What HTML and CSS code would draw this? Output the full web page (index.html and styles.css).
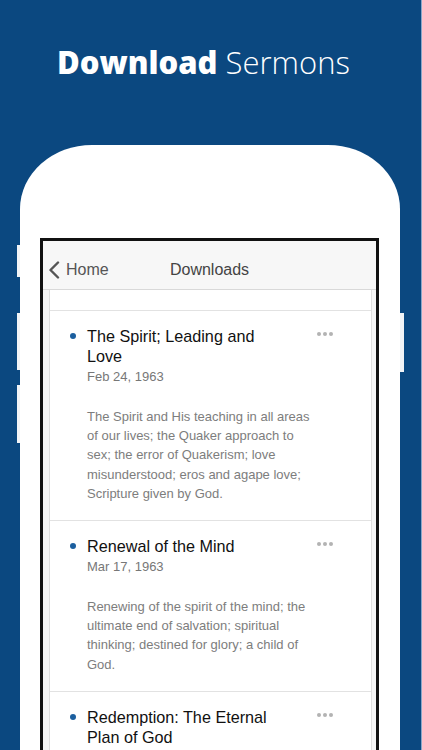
FILE: index.html
```html
<!DOCTYPE html>
<html>
<head>
<meta charset="utf-8">
<link rel="stylesheet" href="styles.css">
</head>
<body>
<div class="page">
  <h1 class="headline"><span class="strong">Download</span> <span class="light">Sermons</span></h1>
  <div class="phone">
    <span class="btn btn-l1"></span>
    <span class="btn btn-l2"></span>
    <span class="btn btn-l3"></span>
    <span class="btn btn-r1"></span>
    <div class="screen">
      <div class="nav">
        <div class="back">
          <svg class="chev" width="12" height="18" viewBox="0 0 12 18"><path d="M10 1.5 L2.5 9 L10 16.5" fill="none" stroke="#555" stroke-width="2.4" stroke-linecap="round" stroke-linejoin="round"/></svg>
          <span>Home</span>
        </div>
        <div class="nav-title">Downloads</div>
      </div>
      <div class="content">
        <div class="list">
          <div class="spacer"></div>
          <div class="item">
            <span class="bullet"></span>
            <div class="body">
              <div class="title">The Spirit; Leading and Love</div>
              <div class="date">Feb 24, 1963</div>
              <div class="desc">The Spirit and His teaching in all areas of our lives; the Quaker approach to sex; the error of Quakerism; love misunderstood; eros and agape love; Scripture given by God.</div>
            </div>
            <span class="more"><i></i><i></i><i></i></span>
          </div>
          <div class="item">
            <span class="bullet"></span>
            <div class="body">
              <div class="title">Renewal of the Mind</div>
              <div class="date">Mar 17, 1963</div>
              <div class="desc">Renewing of the spirit of the mind; the ultimate end of salvation; spiritual thinking; destined for glory; a child of God.</div>
            </div>
            <span class="more"><i></i><i></i><i></i></span>
          </div>
          <div class="item">
            <span class="bullet"></span>
            <div class="body">
              <div class="title">Redemption: The Eternal Plan of God</div>
            </div>
            <span class="more"><i></i><i></i><i></i></span>
          </div>
        </div>
      </div>
    </div>
  </div>
</div>
</body>
</html>
```
FILE: styles.css
```css
html, body {
  margin: 0;
  padding: 0;
}
body {
  width: 422px;
  height: 750px;
  overflow: hidden;
}
.page {
  width: 422px;
  height: 750px;
  overflow: hidden;
  background: #0b4880;
  border-right: 1px solid #8aa6c9;
  box-sizing: border-box;
}
.headline {
  margin: 0;
  height: 145px;
  box-sizing: border-box;
  padding: 42px 0 0 57px;
  font-family: "Open Sans", sans-serif;
  font-size: 31px;
  line-height: 40px;
  color: #fff;
  font-weight: 400;
  white-space: nowrap;
}
.headline .strong {
  font-weight: 800;
}
.headline .light {
  font-weight: 300;
}
.phone {
  position: relative;
  margin-left: 20px;
  width: 380px;
  height: 605px;
  background: #fff;
  border-radius: 72px 72px 0 0 / 64px 64px 0 0;
  padding-top: 93px;
  box-sizing: border-box;
}
.btn {
  position: absolute;
  background: #f2f4f7;
}
.btn-l1 { left: -3px; width: 3px; top: 100px; height: 32px; }
.btn-l2 { left: -3px; width: 3px; top: 168px; height: 57px; }
.btn-l3 { left: -3px; width: 3px; top: 240px; height: 58px; }
.btn-r1 { right: -4px; width: 4px; top: 168px; height: 59px; }
.screen {
  margin-left: 20px;
  width: 339px;
  height: 520px;
  box-sizing: border-box;
  border: 3px solid #111;
  border-bottom: none;
  background: #f5f5f5;
  font-family: "Liberation Sans", Arial, sans-serif;
}
.nav {
  position: relative;
  height: 49px;
  box-sizing: border-box;
  padding-top: 9px;
  background: #f7f7f7;
  border-bottom: 1px solid #d9d9d9;
  display: flex;
  align-items: center;
  justify-content: center;
}
.back {
  position: absolute;
  left: 5px;
  top: 9px;
  bottom: 0;
  display: flex;
  align-items: center;
  gap: 6px;
  color: #555;
  font-size: 16px;
}
.chev {
  display: block;
}
.nav-title {
  font-size: 16px;
  color: #444;
}
.content {
  padding: 0 4px 0 6px;
  background: #f5f5f5;
}
.list {
  background: #fff;
  border-left: 1px solid #dedede;
  border-right: 1px solid #dedede;
}
.spacer {
  height: 20px;
}
.item {
  display: flex;
  align-items: flex-start;
  border-top: 1px solid #e2e2e2;
  padding: 15px 0 17px 20px;
}
.bullet {
  flex: none;
  width: 6px;
  height: 6px;
  border-radius: 50%;
  background: #1b5f9f;
  margin: 7px 11px 0 0;
}
.body {
  flex: none;
  width: 228px;
}
.title {
  width: 196px;
  font-size: 16.2px;
  line-height: 20px;
  color: #111;
}
.date {
  margin-top: 2px;
  font-size: 13px;
  line-height: 18px;
  color: #777;
}
.desc {
  margin-top: 21px;
  font-size: 13px;
  line-height: 19.2px;
  color: #7d7d7d;
}
.more {
  flex: none;
  display: flex;
  gap: 2px;
  margin: 6px 0 0 2px;
}
.more i {
  display: block;
  width: 4px;
  height: 4px;
  border-radius: 50%;
  background: #b3b3b3;
}
```
